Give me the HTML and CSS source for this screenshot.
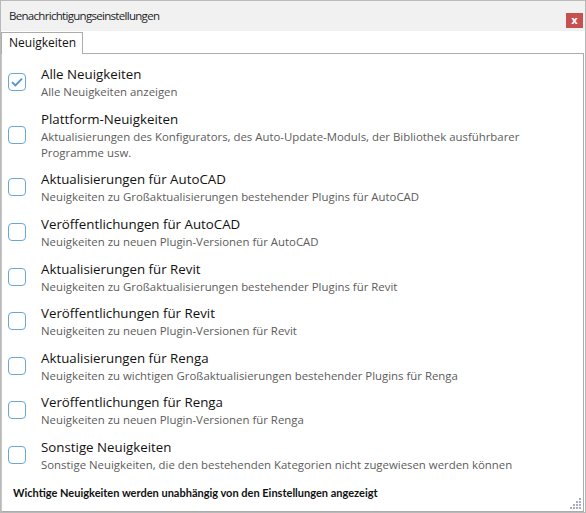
FILE: index.html
```html
<!DOCTYPE html>
<html lang="de">
<head>
  <meta charset="UTF-8">
  <title>Benachrichtigungseinstellungen</title>
  <link rel="stylesheet" href="styles.css">
</head>
<body>

  <div class="window">
    <div class="title-bar">
      <span class="title">Benachrichtigungseinstellungen</span>
      <button class="close-button">x</button>
    </div>

    <div class="tabs">
      <div class="tab active">Neuigkeiten</div>
    </div>

    <div class="panel">
      <div class="list">
        <label class="item">
          <span class="check checked">
            <svg width="12" height="10" viewBox="0 0 12 10"><path d="M1 5.2 L4.4 8.4 L11 1.6" fill="none" stroke="#4f94d4" stroke-width="1.8"/></svg>
          </span>
          <span class="text">
            <span class="name">Alle Neuigkeiten</span>
            <span class="desc">Alle Neuigkeiten anzeigen</span>
          </span>
        </label>
        <label class="item">
          <span class="check"></span>
          <span class="text">
            <span class="name">Plattform-Neuigkeiten</span>
            <span class="desc">Aktualisierungen des Konfigurators, des Auto-Update-Moduls, der Bibliothek ausführbarer Programme usw.</span>
          </span>
        </label>
        <label class="item">
          <span class="check"></span>
          <span class="text">
            <span class="name">Aktualisierungen für AutoCAD</span>
            <span class="desc">Neuigkeiten zu Großaktualisierungen bestehender Plugins für AutoCAD</span>
          </span>
        </label>
        <label class="item">
          <span class="check"></span>
          <span class="text">
            <span class="name">Veröffentlichungen für AutoCAD</span>
            <span class="desc">Neuigkeiten zu neuen Plugin-Versionen für AutoCAD</span>
          </span>
        </label>
        <label class="item">
          <span class="check"></span>
          <span class="text">
            <span class="name">Aktualisierungen für Revit</span>
            <span class="desc">Neuigkeiten zu Großaktualisierungen bestehender Plugins für Revit</span>
          </span>
        </label>
        <label class="item">
          <span class="check"></span>
          <span class="text">
            <span class="name">Veröffentlichungen für Revit</span>
            <span class="desc">Neuigkeiten zu neuen Plugin-Versionen für Revit</span>
          </span>
        </label>
        <label class="item">
          <span class="check"></span>
          <span class="text">
            <span class="name">Aktualisierungen für Renga</span>
            <span class="desc">Neuigkeiten zu wichtigen Großaktualisierungen bestehender Plugins für Renga</span>
          </span>
        </label>
        <label class="item">
          <span class="check"></span>
          <span class="text">
            <span class="name">Veröffentlichungen für Renga</span>
            <span class="desc">Neuigkeiten zu neuen Plugin-Versionen für Renga</span>
          </span>
        </label>
        <label class="item">
          <span class="check"></span>
          <span class="text">
            <span class="name">Sonstige Neuigkeiten</span>
            <span class="desc">Sonstige Neuigkeiten, die den bestehenden Kategorien nicht zugewiesen werden können</span>
          </span>
        </label>
      </div>

      <div class="footer">Wichtige Neuigkeiten werden unabhängig von den Einstellungen angezeigt</div>

      <svg class="grip" width="12" height="12" viewBox="0 0 12 12">
        <g fill="#a9aac6">
          <rect x="9" y="0" width="2" height="2"/>
          <rect x="6" y="3" width="2" height="2"/><rect x="9" y="3" width="2" height="2"/>
          <rect x="3" y="6" width="2" height="2"/><rect x="6" y="6" width="2" height="2"/><rect x="9" y="6" width="2" height="2"/>
          <rect x="0" y="9" width="2" height="2"/><rect x="3" y="9" width="2" height="2"/><rect x="6" y="9" width="2" height="2"/><rect x="9" y="9" width="2" height="2"/>
        </g>
      </svg>
    </div>
  </div>

</body>
</html>
```

FILE: styles.css
```css
/* Notification settings dialog */
body {
  margin: 0;
  font-family: "Open Sans", "Noto Sans", sans-serif;
  background-color: #fff;
}

.window {
  width: 586px;
  height: 513px;
  box-sizing: border-box;
  border: 1px solid #b9b9b9;
  display: flex;
  flex-direction: column;
  background-color: #fff;
}

.title-bar {
  height: 30px;
  flex-shrink: 0;
  display: flex;
  align-items: center;
  justify-content: space-between;
  background-color: #f1f1f1;
  padding: 0 2px 0 8px;
}

.title {
  font-size: 11.5px;
  letter-spacing: -0.7px;
  color: #1e1e1e;
  margin-top: -1px;
}

.close-button {
  width: 17px;
  height: 15px;
  margin-top: 9px;
  padding: 0;
  border: none;
  background-color: #c75050;
  color: #fff;
  font-family: "DejaVu Sans", sans-serif;
  font-size: 10px;
  font-weight: bold;
  line-height: 13px;
}

.tabs {
  height: 22px;
  flex-shrink: 0;
  display: flex;
  align-items: flex-end;
}

.tab {
  height: 22px;
  box-sizing: border-box;
  padding: 1px 6px 0 7px;
  border: 1px solid #acacac;
  border-bottom: none;
  font-size: 12px;
  color: #111;
  background-color: #fff;
  position: relative;
  z-index: 1;
  margin-bottom: -1px;
}

.panel {
  flex: 1;
  border: 1px solid #acacac;
  border-left-color: #c8c8c8;
  margin-right: 1px;
  display: flex;
  flex-direction: column;
  position: relative;
}

.list {
  padding-top: 6px;
}

.item {
  display: flex;
  align-items: center;
  padding: 4.3px 0 4.3px 6px;
}

.check {
  width: 18px;
  height: 18px;
  box-sizing: border-box;
  border: 1px solid #6aa6dc;
  border-radius: 4px;
  flex-shrink: 0;
  display: flex;
  align-items: center;
  justify-content: center;
}

.text {
  display: flex;
  flex-direction: column;
  margin-left: 15px;
}

.name {
  font-size: 13.3px;
  line-height: 20px;
  color: #111;
}

.desc {
  font-size: 11.4px;
  line-height: 16px;
  color: #5c5c5c;
}

.footer {
  margin-top: 8px;
  padding-left: 11px;
  font-family: Lato, "Open Sans", sans-serif;
  font-size: 11px;
  line-height: 16px;
  font-weight: bold;
  color: #111;
}

.grip {
  position: absolute;
  right: 1px;
  bottom: 1px;
}
```
